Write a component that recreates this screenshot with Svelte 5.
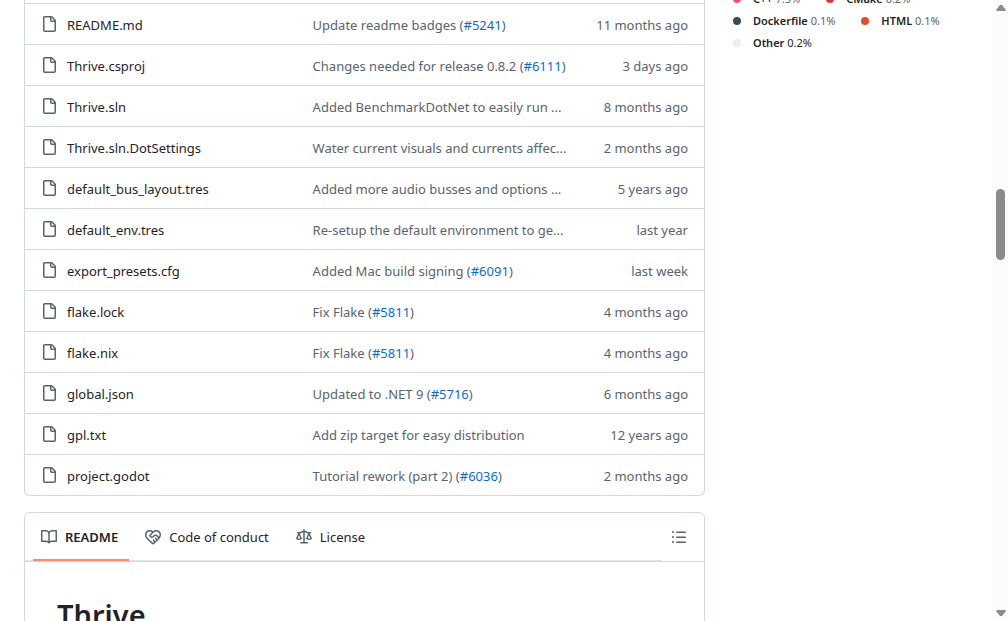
<script>
  const files = [
    { name: 'README.md', message: 'Update readme badges', pr: '5241', age: '11 months ago' },
    { name: 'Thrive.csproj', message: 'Changes needed for release 0.8.2', pr: '6111', age: '3 days ago' },
    { name: 'Thrive.sln', message: 'Added BenchmarkDotNet to easily run ...', age: '8 months ago' },
    { name: 'Thrive.sln.DotSettings', message: 'Water current visuals and currents affec...', age: '2 months ago' },
    { name: 'default_bus_layout.tres', message: 'Added more audio busses and options ...', age: '5 years ago' },
    { name: 'default_env.tres', message: 'Re-setup the default environment to ge...', age: 'last year' },
    { name: 'export_presets.cfg', message: 'Added Mac build signing', pr: '6091', age: 'last week' },
    { name: 'flake.lock', message: 'Fix Flake', pr: '5811', age: '4 months ago' },
    { name: 'flake.nix', message: 'Fix Flake', pr: '5811', age: '4 months ago' },
    { name: 'global.json', message: 'Updated to .NET 9', pr: '5716', age: '6 months ago' },
    { name: 'gpl.txt', message: 'Add zip target for easy distribution', age: '12 years ago' },
    { name: 'project.godot', message: 'Tutorial rework (part 2)', pr: '6036', age: '2 months ago' }
  ];

  const languages = [
    { name: 'C++', share: '7.5%', color: '#f34b7d' },
    { name: 'CMake', share: '0.2%', color: '#da3434' },
    { name: 'Dockerfile', share: '0.1%', color: '#384d54' },
    { name: 'HTML', share: '0.1%', color: '#e34c26' },
    { name: 'Other', share: '0.2%', color: '#ededed', plain: true }
  ];

  const icons = {
    file: 'M2 1.75C2 .784 2.784 0 3.75 0h6.586c.464 0 .909.184 1.237.513l2.914 2.914c.329.328.513.773.513 1.237v9.586A1.75 1.75 0 0 1 13.25 16h-9.5A1.75 1.75 0 0 1 2 14.25Zm1.75-.25a.25.25 0 0 0-.25.25v12.5c0 .138.112.25.25.25h9.5a.25.25 0 0 0 .25-.25V6h-2.75A1.75 1.75 0 0 1 9 4.25V1.5Zm6.75.062V4.25c0 .138.112.25.25.25h2.688l-.011-.013-2.914-2.914-.013-.011Z',
    book: 'M0 1.75A.75.75 0 0 1 .75 1h4.253c1.227 0 2.317.59 3 1.501A3.743 3.743 0 0 1 11.006 1h4.245a.75.75 0 0 1 .75.75v10.5a.75.75 0 0 1-.75.75h-4.507a2.25 2.25 0 0 0-1.591.659l-.622.621a.75.75 0 0 1-1.06 0l-.622-.621A2.25 2.25 0 0 0 5.258 13H.75a.75.75 0 0 1-.75-.75Zm7.251 10.324.004-5.073-.002-2.253A2.25 2.25 0 0 0 5.003 2.5H1.5v9h3.757a3.75 3.75 0 0 1 1.994.574ZM8.755 4.75l-.004 7.322a3.752 3.752 0 0 1 1.992-.572H14.5v-9h-3.495a2.25 2.25 0 0 0-2.25 2.25Z',
    conduct: 'M8.048 2.241c.964-.709 2.079-1.238 3.325-1.241a4.616 4.616 0 0 1 3.282 1.355c.41.408.757.86.996 1.428.238.568.348 1.206.347 1.968 0 2.193-1.505 4.254-3.081 5.862-1.496 1.526-3.213 2.796-4.249 3.563l-.22.163a.749.749 0 0 1-.895 0l-.221-.163c-1.036-.767-2.753-2.037-4.249-3.563C1.51 10.008.007 7.952.002 5.762a4.614 4.614 0 0 1 1.353-3.407C3.123.585 6.223.537 8.048 2.24Zm-1.153.983c-1.25-1.033-3.321-.967-4.48.191a3.115 3.115 0 0 0-.913 2.335c0 1.556 1.109 3.24 2.652 4.813C5.463 11.898 6.96 13.032 8 13.805c.353-.262.758-.565 1.191-.905l-1.326-1.223a.75.75 0 0 1 1.018-1.102l1.48 1.366c.328-.281.659-.577.984-.887L9.99 9.802a.75.75 0 1 1 1.019-1.103l1.384 1.28c.295-.329.566-.661.81-.995L12.92 8.7l-1.167-1.168c-.674-.671-1.78-.664-2.474.03-.268.269-.538.537-.802.797-.893.882-2.319.843-3.185-.032-.346-.35-.693-.697-1.043-1.047a.75.75 0 0 1-.04-1.016c.162-.191.336-.401.52-.623.62-.748 1.356-1.637 2.166-2.417Zm7.112 4.442c.313-.65.491-1.293.491-1.916v-.001c0-.614-.088-1.045-.23-1.385-.143-.339-.357-.633-.673-.949a3.111 3.111 0 0 0-2.218-.915c-1.092.003-2.165.627-3.226 1.602-.823.755-1.554 1.637-2.228 2.45l-.127.154.562.566a.755.755 0 0 0 1.066.02l.794-.79c1.258-1.258 3.312-1.31 4.594-.032.396.394.792.791 1.173 1.173Z',
    law: 'M8.75.75V2h.985c.304 0 .603.08.867.231l1.29.736c.038.022.08.033.124.033h2.234a.75.75 0 0 1 0 1.5h-.427l2.111 4.692a.75.75 0 0 1-.154.838l-.53-.53.529.531-.001.002-.002.002-.006.006-.006.005-.01.01-.045.04c-.21.176-.441.327-.686.45C14.556 10.78 13.88 11 13 11a4.498 4.498 0 0 1-2.023-.454 3.544 3.544 0 0 1-.686-.45l-.045-.04-.016-.015-.006-.006-.004-.004v-.001a.75.75 0 0 1-.154-.838L12.178 4.5h-.162c-.305 0-.604-.079-.868-.231l-1.29-.736a.245.245 0 0 0-.124-.033H8.75V13h2.5a.75.75 0 0 1 0 1.5h-6.5a.75.75 0 0 1 0-1.5h2.5V3.5h-.984a.245.245 0 0 0-.124.033l-1.289.737c-.265.15-.564.23-.869.23h-.162l2.112 4.692a.75.75 0 0 1-.154.838l-.53-.53.529.531-.001.002-.002.002-.006.006-.016.015-.045.04c-.21.176-.441.327-.686.45C4.556 10.78 3.88 11 3 11a4.498 4.498 0 0 1-2.023-.454 3.544 3.544 0 0 1-.686-.45l-.045-.04-.016-.015-.006-.006-.004-.004v-.001a.75.75 0 0 1-.154-.838L2.178 4.5H1.75a.75.75 0 0 1 0-1.5h2.234a.249.249 0 0 0 .125-.033l1.288-.737c.265-.15.564-.23.869-.23h.984V.75a.75.75 0 0 1 1.5 0Zm2.945 8.477c.285.135.718.273 1.305.273s1.02-.138 1.305-.273L13 6.327Zm-10 0c.285.135.718.273 1.305.273s1.02-.138 1.305-.273L3 6.327Z',
    list: 'M5.75 2.5h8.5a.75.75 0 0 1 0 1.5h-8.5a.75.75 0 0 1 0-1.5Zm0 5h8.5a.75.75 0 0 1 0 1.5h-8.5a.75.75 0 0 1 0-1.5Zm0 5h8.5a.75.75 0 0 1 0 1.5h-8.5a.75.75 0 0 1 0-1.5ZM2 14a1 1 0 1 1 0-2 1 1 0 0 1 0 2Zm1-6a1 1 0 1 1-2 0 1 1 0 0 1 2 0ZM2 4a1 1 0 1 1 0-2 1 1 0 0 1 0 2Z'
  };

  const tabs = [
    { label: 'README', icon: 'book', active: true },
    { label: 'Code of conduct', icon: 'conduct' },
    { label: 'License', icon: 'law' }
  ];
</script>

{#snippet icon(name)}
  <svg class="icon" viewBox="0 0 16 16" width="16" height="16" aria-hidden="true"><path d={icons[name]} /></svg>
{/snippet}

<div class="viewport">
  <div class="page">
    <main>
      <div class="files">
        <table>
          <tbody>
            {#each files as file}
              <tr>
                <td class="name"><div class="file">{@render icon('file')}<a href="#file">{file.name}</a></div></td>
                <td class="message">
                  <a href="#commit">{file.message}</a>{#if file.pr}{' '}<span>(<a class="pr" href="#pr">#{file.pr}</a>)</span>{/if}
                </td>
                <td class="age">{file.age}</td>
              </tr>
            {/each}
          </tbody>
        </table>
      </div>

      <section class="readme">
        <header>
          <nav>
            {#each tabs as tab}
              <a href="#tab" class="tab" class:active={tab.active}>{@render icon(tab.icon)}<span>{tab.label}</span></a>
            {/each}
          </nav>
          <button aria-label="Outline">{@render icon('list')}</button>
        </header>
        <article><h1>Thrive</h1></article>
      </section>
    </main>

    <aside>
      <ul>
        {#each languages as lang}
          <li>
            <svg viewBox="0 0 16 16" width="16" height="16" aria-hidden="true"><circle cx="8" cy="8" r="4" fill={lang.color} /></svg>
            <a href="#language"><strong>{lang.name}</strong> <span class:plain={lang.plain}>{lang.share}</span></a>
          </li>
        {/each}
      </ul>
    </aside>
  </div>

  <div class="scrollbar" aria-hidden="true">
    <svg viewBox="0 0 10 8" width="10" height="8"><path d="M4 1h2l4 5-1 1H1L0 6z" /></svg>
    <div class="track"><div class="thumb"></div></div>
    <svg viewBox="0 0 10 8" width="10" height="8"><path d="M4 7h2l4-5-1-1H1L0 2z" /></svg>
  </div>
</div>

<style>
  :global(body) {
    margin: 0;
    background: #fff;
  }
  .viewport {
    display: flex;
    height: 100vh;
    overflow: hidden;
    color: #1f2328;
    font: 13px/20px 'Noto Sans', sans-serif;
  }
  .page {
    flex: 1;
    min-width: 0;
    display: grid;
    grid-template-columns: minmax(0, 1fr) 240px;
    gap: 24px;
    padding: 0 24px;
  }
  a {
    color: inherit;
    text-decoration: none;
  }
  .icon {
    flex: none;
    display: block;
    fill: #59636e;
  }
  .files {
    padding-top: 3px;
    border: 1px solid #d1d9e0;
    border-top: 0;
    border-radius: 0 0 6px 6px;
  }
  table {
    width: 100%;
    table-layout: fixed;
    border-collapse: separate;
    border-spacing: 0;
  }
  td {
    height: 41px;
    padding: 2px 16px 0;
    box-sizing: border-box;
    border-top: 1px solid #d1d9e0;
    white-space: nowrap;
    color: #59636e;
  }
  .name {
    width: 40%;
    color: #1f2328;
  }
  .message {
    padding-right: 0;
  }
  .age {
    width: 136px;
    text-align: right;
  }
  .file {
    display: flex;
    align-items: flex-start;
    gap: 10px;
  }
  .file .icon {
    margin-top: 1px;
  }
  .pr {
    color: #0969da;
  }
  .readme {
    margin-top: 16px;
    border: 1px solid #d1d9e0;
    border-radius: 6px;
  }
  header {
    display: flex;
    align-items: center;
    height: 48px;
    border-bottom: 1px solid #d1d9e0;
  }
  nav {
    flex: 1;
    display: flex;
    gap: 8px;
    height: 100%;
    padding: 0 8px;
    box-sizing: border-box;
    box-shadow: inset 0 -1px #d1d9e0b3;
  }
  .tab {
    display: flex;
    align-items: center;
    gap: 8px;
    padding: 2px 11px 0 8px;
    border-bottom: 2px solid transparent;
  }
  .active {
    font-weight: 600;
    border-bottom-color: #fd8c73;
  }
  button {
    padding: 8px;
    margin-left: 1px;
    margin-right: 9px;
    border: 0;
    background: none;
  }
  article {
    padding: 33px 32px 40px;
  }
  h1 {
    margin: 0;
    font-size: 29px;
    line-height: 40px;
    font-weight: 600;
  }
  ul {
    display: flex;
    flex-wrap: wrap;
    gap: 4px 22px;
    margin: -10px 0 0;
    padding: 0;
    list-style: none;
    font-size: 11px;
    line-height: 18px;
  }
  li {
    display: flex;
    align-items: center;
    gap: 8px;
  }
  strong {
    font-weight: 600;
  }
  li span {
    color: #59636e;
  }
  li .plain {
    color: #1f2328;
  }
  .scrollbar {
    width: 15px;
    display: flex;
    flex-direction: column;
    align-items: center;
    padding: 4px 0;
    box-sizing: border-box;
    background: #fcfcfc;
    fill: #8b8b8b;
  }
  .track {
    flex: 1;
    padding-top: 177px;
  }
  .thumb {
    width: 9px;
    height: 71px;
    border-radius: 5px;
    background: #8b8b8b;
  }
</style>
